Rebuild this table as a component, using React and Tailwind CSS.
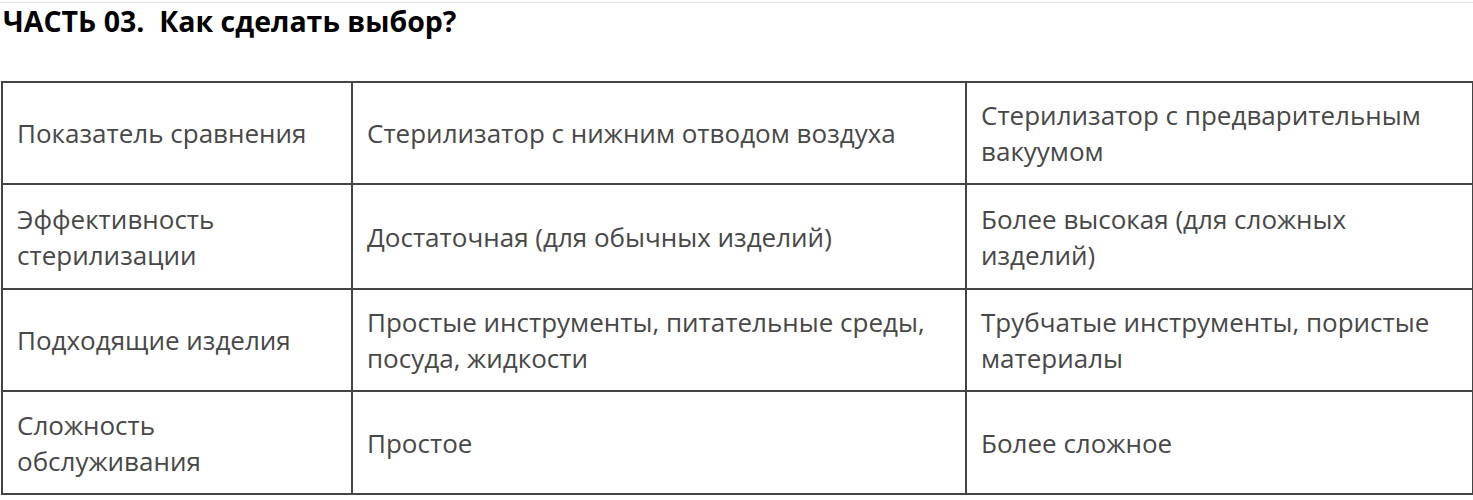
import React from "react";

const rows = [
  { h: "h-[102px]", cells: ["Показатель сравнения", "Стерилизатор с нижним отводом воздуха", "Стерилизатор с предварительным вакуумом"] },
  { h: "h-[105px]", cells: ["Эффективность стерилизации", "Достаточная (для обычных изделий)", "Более высокая (для сложных изделий)"] },
  { h: "h-[101px]", cells: ["Подходящие изделия", "Простые инструменты, питательные среды, посуда, жидкости", "Трубчатые инструменты, пористые материалы"] },
  { h: "h-[103px]", cells: ["Сложность обслуживания", "Простое", "Более сложное"] },
];

export default function App() {
  return (
    <div className="bg-white pt-[2px] font-['Open_Sans',sans-serif]">
      <div className="border-t border-[#e6e6e6]">
        <h2 className="pl-[3px] text-[28.5px] font-bold leading-[36px] text-black">
          ЧАСТЬ 03.&nbsp; Как сделать выбор?
        </h2>
        <table className="mt-[42px] ml-[1px] w-[1471px] table-fixed border-collapse text-[26px] leading-[36px] text-[#484848]">
          <colgroup>
            <col className="w-[350px]" />
            <col className="w-[614px]" />
            <col className="w-[507px]" />
          </colgroup>
          <tbody>
            {rows.map((row, i) => (
              <tr key={i} className={row.h}>
                {row.cells.map((cell, j) => (
                  <td
                    key={j}
                    className="border-2 border-[#444] px-[14px] py-[14px] align-middle"
                  >
                    {cell}
                  </td>
                ))}
              </tr>
            ))}
          </tbody>
        </table>
      </div>
    </div>
  );
}
